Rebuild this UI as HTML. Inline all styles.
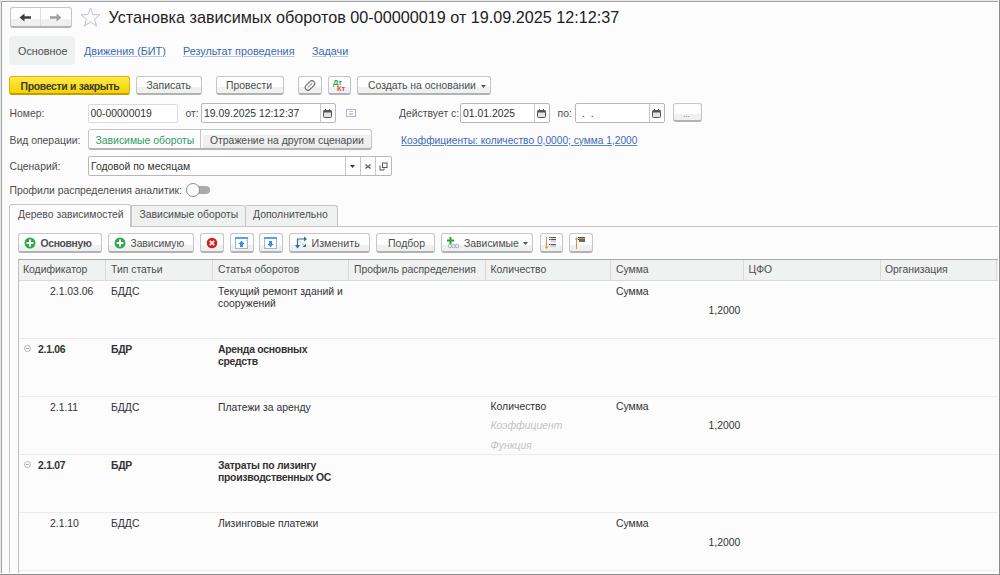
<!DOCTYPE html>
<html><head><meta charset="utf-8">
<style>
*{box-sizing:border-box;margin:0;padding:0}
html,body{width:1000px;height:575px;overflow:hidden;background:#fcfcfc}
body{position:relative;font-family:"Liberation Sans",sans-serif;font-size:10.4px;color:#4d4d4d}
.a{position:absolute}
.t{position:absolute;white-space:nowrap;line-height:1}
.btn{position:absolute;border:1px solid #c6c6c6;border-bottom:2px solid #b2b2b2;border-radius:3px;background:linear-gradient(#fefefe 0,#fefefe 62%,#eff0f0 62%,#eff0f0 100%)}
.inp{position:absolute;border:1px solid #bcbcbc;border-radius:2px;background:#fff}
.u{text-decoration:underline;text-decoration-color:#9db4dc;text-underline-offset:1px}
svg{position:absolute}
</style></head><body>
<div class="btn" style="left:10px;top:7px;width:62px;height:21px;"></div>
<div class="a" style="left:40px;top:8px;width:1px;height:18px;background:#dedede"></div>
<svg style="left:18px;top:11px" width="50" height="14" viewBox="0 0 50 14">
<path d="M1.5 6.5 L6.5 2.5 L6.5 5.3 L13 5.3 L13 7.7 L6.5 7.7 L6.5 10.5 Z" fill="#3e3e3e"/>
<path d="M43.5 6.5 L38.5 2.5 L38.5 5.3 L32 5.3 L32 7.7 L38.5 7.7 L38.5 10.5 Z" fill="#a0a0a0"/>
</svg>
<svg style="left:80px;top:7px" width="21" height="20" viewBox="0 0 21 20">
<path d="M10.5 1 L13 7.6 L20 7.8 L14.5 12 L16.5 19 L10.5 15 L4.5 19 L6.5 12 L1 7.8 L8 7.6 Z" fill="none" stroke="#bcc3cc" stroke-width="1"/>
</svg>
<div class="t" style="left:108.5px;top:8.79px;font-size:16.2px;color:#1e1e1e;">Установка зависимых оборотов 00-00000019 от 19.09.2025 12:12:37</div>
<div class="a" style="left:9px;top:36px;width:66px;height:29px;background:#eff0f0;border-radius:4px"></div>
<div class="t" style="left:18px;top:45.76px;font-size:10.8px;color:#4d4d4d;">Основное</div>
<div class="t" style="left:84px;top:45.76px;font-size:10.8px;color:#3c68b8;text-decoration:underline;text-decoration-color:#b4c6e6">Движения (БИТ)</div>
<div class="t" style="left:183px;top:45.76px;font-size:10.8px;color:#3c68b8;text-decoration:underline;text-decoration-color:#b4c6e6">Результат проведения</div>
<div class="t" style="left:312px;top:45.76px;font-size:10.8px;color:#3c68b8;text-decoration:underline;text-decoration-color:#b4c6e6">Задачи</div>
<div class="a" style="left:9px;top:76px;width:121px;height:19px;border:1px solid #d9b600;border-bottom:2px solid #bfa000;border-radius:3px;background:linear-gradient(#ffe94d,#f4d300)"></div>
<div class="t" style="left:20.5px;top:81.60px;font-size:10.4px;color:#3a3a2a;font-weight:bold;letter-spacing:-0.3px">Провести и закрыть</div>
<div class="btn" style="left:136px;top:76px;width:66px;height:19px;"></div>
<div class="t" style="left:146.5px;top:81.10px;font-size:10.4px;color:#4d4d4d;">Записать</div>
<div class="btn" style="left:216px;top:76px;width:68px;height:19px;"></div>
<div class="t" style="left:226px;top:81.10px;font-size:10.4px;color:#4d4d4d;">Провести</div>
<div class="btn" style="left:298px;top:76px;width:24px;height:19px;"></div>
<svg style="left:303px;top:79px" width="14" height="13" viewBox="0 0 14 13">
<g transform="rotate(45 7 6.5)"><rect x="4.2" y="1" width="5.6" height="11" rx="2.8" fill="none" stroke="#6a6a6a" stroke-width="1.1"/>
<path d="M7 3.5 V9" stroke="#8a8a8a" stroke-width="1"/></g>
</svg>
<div class="btn" style="left:328px;top:76px;width:23px;height:19px;"></div>
<div class="t" style="left:333px;top:79.05px;font-size:7.5px;color:#2ea452;font-weight:bold">Дт</div>
<div class="t" style="left:337px;top:85.35px;font-size:7.5px;color:#e04848;font-weight:bold">Кт</div>
<div class="btn" style="left:357px;top:76px;width:134px;height:19px;"></div>
<div class="t" style="left:368px;top:81.10px;font-size:10.4px;color:#4d4d4d;">Создать на основании</div>
<svg style="left:481px;top:85px" width="5" height="3" viewBox="0 0 5 3"><path d="M0 0 H5 L2.5 3 Z" fill="#555"/></svg>
<div class="t" style="left:9.5px;top:109.10px;font-size:10.4px;color:#4d4d4d;">Номер:</div>
<div class="a" style="left:88px;top:104px;width:90px;height:19px;border:1px solid #dadada;border-radius:2px;background:#fff"></div>
<div class="t" style="left:90.5px;top:109.10px;font-size:10.4px;color:#333;">00-00000019</div>
<div class="t" style="left:185.5px;top:109.10px;font-size:10.4px;color:#4d4d4d;">от:</div>
<div class="a" style="left:201px;top:103px;width:135px;height:20px;border:1px solid #b8b8b8;border-radius:2px;background:#fff"></div>
<div class="a" style="left:320px;top:104px;width:1px;height:18px;background:#c8c8c8"></div>
<div class="t" style="left:204px;top:109.10px;font-size:10.4px;color:#333;">19.09.2025 12:12:37</div>
<svg style="left:323px;top:109px" width="9" height="9" viewBox="0 0 9 9">
<rect x="0.5" y="1.5" width="8" height="7" rx="1" fill="#e4e4e4" stroke="#555" stroke-width="1"/>
<rect x="0.5" y="1.5" width="8" height="2" fill="#555"/>
<rect x="2" y="0" width="1" height="2" fill="#555"/><rect x="6" y="0" width="1" height="2" fill="#555"/>
</svg>
<svg style="left:346px;top:109px" width="10" height="8" viewBox="0 0 10 8">
<rect x="0.5" y="0.5" width="9" height="7" fill="#fff" stroke="#a9b9d2" stroke-width="1"/>
<rect x="3" y="2" width="4" height="1" fill="#c8c8c8"/><rect x="3" y="4" width="4" height="2" fill="#d0d0d0"/>
</svg>
<div class="t" style="left:399px;top:109.10px;font-size:10.4px;color:#4d4d4d;">Действует с:</div>
<div class="a" style="left:460px;top:103px;width:90px;height:20px;border:1px solid #b8b8b8;border-radius:2px;background:#fff"></div>
<div class="a" style="left:534px;top:104px;width:1px;height:18px;background:#c8c8c8"></div>
<div class="t" style="left:463px;top:109.10px;font-size:10.4px;color:#333;">01.01.2025</div>
<svg style="left:537px;top:109px" width="9" height="9" viewBox="0 0 9 9">
<rect x="0.5" y="1.5" width="8" height="7" rx="1" fill="#e4e4e4" stroke="#555" stroke-width="1"/>
<rect x="0.5" y="1.5" width="8" height="2" fill="#555"/>
<rect x="2" y="0" width="1" height="2" fill="#555"/><rect x="6" y="0" width="1" height="2" fill="#555"/>
</svg>
<div class="t" style="left:557.5px;top:109.10px;font-size:10.4px;color:#4d4d4d;">по:</div>
<div class="a" style="left:575px;top:103px;width:90px;height:20px;border:1px solid #b8b8b8;border-radius:2px;background:#fff"></div>
<div class="a" style="left:649px;top:104px;width:1px;height:18px;background:#c8c8c8"></div>
<div class="t" style="left:582px;top:109.10px;font-size:10.4px;color:#333;">.&nbsp;&nbsp;.</div>
<svg style="left:652px;top:109px" width="9" height="9" viewBox="0 0 9 9">
<rect x="0.5" y="1.5" width="8" height="7" rx="1" fill="#e4e4e4" stroke="#555" stroke-width="1"/>
<rect x="0.5" y="1.5" width="8" height="2" fill="#555"/>
<rect x="2" y="0" width="1" height="2" fill="#555"/><rect x="6" y="0" width="1" height="2" fill="#555"/>
</svg>
<div class="btn" style="left:673px;top:103px;width:29px;height:19px;"></div>
<div class="t" style="left:683px;top:111.13px;font-size:8px;color:#555;">...</div>
<div class="t" style="left:9.5px;top:135.60px;font-size:10.4px;color:#4d4d4d;">Вид операции:</div>
<div class="a" style="left:88px;top:129px;width:284px;height:21px;border:1px solid #c4c4c4;border-bottom:2px solid #b4b4b4;border-radius:3px;background:linear-gradient(#fdfdfd 0,#fdfdfd 5px,#eff0f0 5px,#eff0f0 80%,#e8e9e9 100%)"></div>
<div class="a" style="left:89px;top:130px;width:111px;height:18px;background:#fdfdfd;border-radius:2px 0 0 2px"></div>
<div class="a" style="left:201px;top:130px;width:2px;height:18px;background:#fbfbfb"></div>
<div class="a" style="left:200px;top:130px;width:1px;height:18px;background:#c4c4c4"></div>
<div class="t" style="left:95.5px;top:135.60px;font-size:10.4px;color:#2e9c62;">Зависимые обороты</div>
<div class="t" style="left:210px;top:135.60px;font-size:10.4px;color:#4d4d4d;">Отражение на другом сценарии</div>
<div class="t" style="left:401px;top:135.77px;font-size:10.2px;color:#3c68b8;text-decoration:underline;text-decoration-color:#5f86c8">Коэффициенты: количество 0,0000; сумма 1,2000</div>
<div class="t" style="left:9.5px;top:162.10px;font-size:10.4px;color:#4d4d4d;">Сценарий:</div>
<div class="a" style="left:88px;top:156px;width:304px;height:20px;border:1px solid #b8b8b8;border-radius:2px;background:#fff"></div>
<div class="a" style="left:345px;top:157px;width:1px;height:18px;background:#c8c8c8"></div>
<div class="a" style="left:360px;top:157px;width:1px;height:18px;background:#c8c8c8"></div>
<div class="a" style="left:375px;top:157px;width:1px;height:18px;background:#c8c8c8"></div>
<div class="t" style="left:91px;top:162.10px;font-size:10.4px;color:#333;">Годовой по месяцам</div>
<svg style="left:350px;top:165px" width="5" height="3" viewBox="0 0 5 3"><path d="M0 0 H5 L2.5 3 Z" fill="#333"/></svg>
<svg style="left:365px;top:164px" width="6" height="5" viewBox="0 0 6 5"><path d="M0.5 0.5 L5.5 4.5 M5.5 0.5 L0.5 4.5" stroke="#555" stroke-width="1.1"/></svg>
<svg style="left:379px;top:162px" width="9" height="9" viewBox="0 0 9 9">
<path d="M1 3.5 V8 H5 V6.5" fill="none" stroke="#555" stroke-width="1"/>
<rect x="3.5" y="1" width="4.5" height="4.5" fill="none" stroke="#555" stroke-width="1"/>
</svg>
<div class="t" style="left:9.5px;top:185.60px;font-size:10.4px;color:#4d4d4d;">Профили распределения аналитик:</div>
<div class="a" style="left:193px;top:186px;width:17px;height:8px;background:#aaaaaa;border-radius:0 4px 4px 0"></div>
<div class="a" style="left:186px;top:183px;width:14px;height:14px;background:#fff;border:1px solid #8f8f8f;border-radius:50%"></div>
<div class="a" style="left:9px;top:226px;width:989px;height:347px;border-left:1px solid #c6c6c6;border-top:1px solid #c6c6c6"></div>
<div class="a" style="left:9px;top:204px;width:122px;height:23px;background:#fcfcfc;border:1px solid #c6c6c6;border-bottom:none;border-radius:3px 3px 0 0"></div>
<div class="a" style="left:131px;top:205px;width:115px;height:21px;background:#eff0f0;border:1px solid #c6c6c6;border-left:none;border-bottom:none;border-radius:0 3px 0 0"></div>
<div class="a" style="left:246px;top:205px;width:92px;height:21px;background:#eff0f0;border:1px solid #c6c6c6;border-left:none;border-bottom:none;border-radius:0 3px 0 0"></div>
<div class="a" style="left:131px;top:205px;width:1px;height:21px;background:#c6c6c6"></div>
<div class="t" style="left:18px;top:210.10px;font-size:10.4px;color:#4d4d4d;">Дерево зависимостей</div>
<div class="t" style="left:139.5px;top:210.10px;font-size:10.4px;color:#4d4d4d;">Зависимые обороты</div>
<div class="t" style="left:253px;top:210.10px;font-size:10.4px;color:#4d4d4d;">Дополнительно</div>
<div class="btn" style="left:18px;top:233px;width:84px;height:20px;"></div>
<svg style="left:23.5px;top:237px" width="12" height="12" viewBox="0 0 12 12">
<circle cx="6" cy="6" r="5.5" fill="#2da84a"/>
<path d="M6 2.6 V9.4 M2.6 6 H9.4" stroke="#fff" stroke-width="2"/>
</svg>
<div class="t" style="left:40.5px;top:238.60px;font-size:10.4px;color:#4d4d4d;font-weight:bold;letter-spacing:-0.36px">Основную</div>
<div class="btn" style="left:108px;top:233px;width:86px;height:20px;"></div>
<svg style="left:113.5px;top:237px" width="12" height="12" viewBox="0 0 12 12">
<circle cx="6" cy="6" r="5.5" fill="#2da84a"/>
<path d="M6 2.6 V9.4 M2.6 6 H9.4" stroke="#fff" stroke-width="2"/>
</svg>
<div class="t" style="left:130.5px;top:238.77px;font-size:10.2px;color:#4d4d4d;">Зависимую</div>
<div class="btn" style="left:200px;top:233px;width:24px;height:20px;"></div>
<svg style="left:206px;top:237px" width="12" height="12" viewBox="0 0 12 12">
<circle cx="6" cy="6" r="5.3" fill="#d42020"/>
<path d="M3.8 3.8 L8.2 8.2 M8.2 3.8 L3.8 8.2" stroke="#fff" stroke-width="1.7"/>
</svg>
<div class="btn" style="left:230px;top:233px;width:24px;height:20px;"></div>
<svg style="left:235px;top:237px" width="13" height="12" viewBox="0 0 13 12">
<rect x="0.5" y="0.5" width="12" height="11" fill="#fff" stroke="#a3b6d2" stroke-width="1"/>
<rect x="0" y="0" width="13" height="2" fill="#5c9fe4"/>
<path d="M6.5 3.8 L9.7 7 H8 V10 H5 V7 H3.3 Z" fill="#3a8ee6"/>
</svg>
<div class="btn" style="left:259px;top:233px;width:24px;height:20px;"></div>
<svg style="left:264px;top:237px" width="13" height="12" viewBox="0 0 13 12">
<rect x="0.5" y="0.5" width="12" height="11" fill="#fff" stroke="#a3b6d2" stroke-width="1"/>
<rect x="0" y="0" width="13" height="2" fill="#5c9fe4"/>
<path d="M6.5 10.2 L9.7 7 H8 V4 H5 V7 H3.3 Z" fill="#3a8ee6"/>
</svg>
<div class="btn" style="left:289px;top:233px;width:81px;height:20px;"></div>
<svg style="left:295px;top:236px" width="13" height="13" viewBox="0 0 13 13">
<path d="M2.5 12 V3 H9" fill="none" stroke="#2d6db8" stroke-width="1.2"/>
<path d="M9 0.5 L12 3 L9 5.5 Z" fill="#2d6db8"/>
<path d="M0 9 L2.5 12.5 L5 9 Z" fill="#2d6db8"/>
<path d="M4 4.5 L10 10.5" stroke="#6a9fd8" stroke-width="1" stroke-dasharray="1.5 1"/>
<path d="M7.5 11 L11 11 L11 7.5 Z" fill="#2d6db8"/>
</svg>
<div class="t" style="left:311.5px;top:238.34px;font-size:10.7px;color:#4d4d4d;">Изменить</div>
<div class="btn" style="left:376px;top:233px;width:59px;height:20px;"></div>
<div class="t" style="left:388px;top:237.81px;font-size:10.5px;color:#4d4d4d;">Подбор</div>
<div class="btn" style="left:441px;top:233px;width:92px;height:20px;"></div>
<svg style="left:446px;top:236px" width="14" height="13" viewBox="0 0 14 13">
<circle cx="4" cy="10" r="1.8" fill="none" stroke="#9aaabb" stroke-width="0.9"/>
<circle cx="7.5" cy="10" r="1.8" fill="none" stroke="#9aaabb" stroke-width="0.9"/>
<circle cx="11" cy="10" r="1.8" fill="none" stroke="#9aaabb" stroke-width="0.9"/>
<path d="M4.5 1 V8 M1 4.5 H8" stroke="#22aa22" stroke-width="2"/>
</svg>
<div class="t" style="left:464px;top:238.60px;font-size:10.4px;color:#4d4d4d;">Зависимые</div>
<svg style="left:523px;top:242px" width="5" height="3" viewBox="0 0 5 3"><path d="M0 0 H5 L2.5 3 Z" fill="#555"/></svg>
<div class="btn" style="left:540px;top:233px;width:23px;height:20px;"></div>
<svg style="left:544px;top:236px" width="14" height="14" viewBox="0 0 14 14">
<path d="M2.5 1 V12" stroke="#f08a3a" stroke-width="1"/><path d="M0.8 10.5 L2.5 13 L4.2 10.5 Z" fill="#f08a3a"/>
<rect x="5" y="1" width="1" height="1" fill="#444"/><rect x="6.5" y="1" width="5.5" height="1.2" fill="#555"/>
<rect x="5" y="3" width="1" height="1" fill="#444"/><rect x="6.5" y="3" width="5.5" height="1.2" fill="#555"/>
<rect x="6.5" y="5" width="5.5" height="1.2" fill="#ccc"/>
<rect x="5" y="8" width="1" height="1" fill="#444"/><rect x="6.5" y="8" width="5.5" height="1.2" fill="#555"/>
<rect x="6.5" y="10" width="5.5" height="1.2" fill="#ccc"/>
</svg>
<div class="btn" style="left:569px;top:233px;width:24px;height:20px;"></div>
<svg style="left:573px;top:236px" width="14" height="14" viewBox="0 0 14 14">
<path d="M3.5 2 V13" stroke="#f08a3a" stroke-width="1"/><path d="M1.8 3.5 L3.5 1 L5.2 3.5 Z" fill="#f08a3a"/>
<rect x="5" y="1" width="1" height="1" fill="#444"/><rect x="6" y="1" width="6" height="1.3" fill="#555"/>
<rect x="5" y="3" width="1" height="1" fill="#444"/><rect x="6" y="2.5" width="6" height="3.5" fill="#6a6a6a"/>
</svg>
<div class="a" style="left:18px;top:259px;width:980px;height:314px;border-left:1px solid #bdbdbd;border-top:1px solid #a9a9a9;background:#fcfcfc"></div>
<div class="a" style="left:19px;top:260px;width:979px;height:21px;background:#f0f1f1;border-bottom:1px solid #d9d9d9"></div>
<div class="a" style="left:105px;top:260px;width:1px;height:20px;background:#dadada"></div>
<div class="a" style="left:212px;top:260px;width:1px;height:20px;background:#dadada"></div>
<div class="a" style="left:348px;top:260px;width:1px;height:20px;background:#dadada"></div>
<div class="a" style="left:485px;top:260px;width:1px;height:20px;background:#dadada"></div>
<div class="a" style="left:610px;top:260px;width:1px;height:20px;background:#dadada"></div>
<div class="a" style="left:743px;top:260px;width:1px;height:20px;background:#dadada"></div>
<div class="a" style="left:880px;top:260px;width:1px;height:20px;background:#dadada"></div>
<div class="a" style="left:996px;top:260px;width:1px;height:20px;background:#dadada"></div>
<div class="t" style="left:23px;top:265.10px;font-size:10.4px;color:#4d4d4d;">Кодификатор</div>
<div class="t" style="left:111px;top:265.10px;font-size:10.4px;color:#4d4d4d;">Тип статьи</div>
<div class="t" style="left:218px;top:265.10px;font-size:10.4px;color:#4d4d4d;">Статья оборотов</div>
<div class="t" style="left:354px;top:265.10px;font-size:10.4px;color:#4d4d4d;">Профиль распределения</div>
<div class="t" style="left:490.5px;top:265.10px;font-size:10.4px;color:#4d4d4d;">Количество</div>
<div class="t" style="left:616px;top:265.10px;font-size:10.4px;color:#4d4d4d;">Сумма</div>
<div class="t" style="left:748.5px;top:265.10px;font-size:10.4px;color:#4d4d4d;">ЦФО</div>
<div class="t" style="left:885px;top:265.10px;font-size:10.4px;color:#4d4d4d;">Организация</div>
<div class="a" style="left:19px;top:338px;width:979px;height:1px;background:#ececec"></div>
<div class="a" style="left:19px;top:396px;width:979px;height:1px;background:#ececec"></div>
<div class="a" style="left:19px;top:454px;width:979px;height:1px;background:#ececec"></div>
<div class="a" style="left:19px;top:512px;width:979px;height:1px;background:#ececec"></div>
<div class="a" style="left:19px;top:570px;width:979px;height:1px;background:#ececec"></div>
<div class="t" style="left:50px;top:286.50px;font-size:10.4px;color:#333;">2.1.03.06</div>
<div class="t" style="left:111px;top:286.50px;font-size:10.4px;color:#333;">БДДС</div>
<div class="t" style="left:218px;top:286.50px;font-size:10.4px;color:#333;">Текущий ремонт зданий и</div>
<div class="t" style="left:218px;top:299.00px;font-size:10.4px;color:#333;">сооружений</div>
<div class="t" style="left:616px;top:286.50px;font-size:10.4px;color:#333;">Сумма</div>
<div class="t" style="left:708.5px;top:305.70px;font-size:10.4px;color:#333;">1,2000</div>
<svg style="left:24px;top:345px" width="7" height="7" viewBox="0 0 7 7"><circle cx="3.5" cy="3.5" r="3" fill="none" stroke="#aaa" stroke-width="0.9"/><path d="M1.8 3.5 H5.2" stroke="#aaa" stroke-width="0.9"/></svg>
<div class="t" style="left:38px;top:344.50px;font-size:10.4px;color:#333;font-weight:bold;letter-spacing:-0.26px">2.1.06</div>
<div class="t" style="left:111px;top:344.50px;font-size:10.4px;color:#333;font-weight:bold;letter-spacing:-0.26px">БДР</div>
<div class="t" style="left:218px;top:344.50px;font-size:10.4px;color:#333;font-weight:bold;letter-spacing:-0.26px">Аренда основных</div>
<div class="t" style="left:218px;top:357.00px;font-size:10.4px;color:#333;font-weight:bold;letter-spacing:-0.26px">средств</div>
<div class="t" style="left:50px;top:402.50px;font-size:10.4px;color:#333;">2.1.11</div>
<div class="t" style="left:111px;top:402.50px;font-size:10.4px;color:#333;">БДДС</div>
<div class="t" style="left:218px;top:402.50px;font-size:10.4px;color:#333;">Платежи за аренду</div>
<div class="t" style="left:490.5px;top:402.10px;font-size:10.4px;color:#333;">Количество</div>
<div class="t" style="left:616px;top:402.10px;font-size:10.4px;color:#333;">Сумма</div>
<div class="t" style="left:708.5px;top:421.40px;font-size:10.4px;color:#333;">1,2000</div>
<div class="t" style="left:490.5px;top:421.40px;font-size:10.4px;color:#c4c4c4;font-style:italic">Коэффициент</div>
<div class="t" style="left:490.5px;top:440.70px;font-size:10.4px;color:#c4c4c4;font-style:italic">Функция</div>
<svg style="left:24px;top:461px" width="7" height="7" viewBox="0 0 7 7"><circle cx="3.5" cy="3.5" r="3" fill="none" stroke="#aaa" stroke-width="0.9"/><path d="M1.8 3.5 H5.2" stroke="#aaa" stroke-width="0.9"/></svg>
<div class="t" style="left:38px;top:460.50px;font-size:10.4px;color:#333;font-weight:bold;letter-spacing:-0.26px">2.1.07</div>
<div class="t" style="left:111px;top:460.50px;font-size:10.4px;color:#333;font-weight:bold;letter-spacing:-0.26px">БДР</div>
<div class="t" style="left:218px;top:460.50px;font-size:10.4px;color:#333;font-weight:bold;letter-spacing:-0.26px">Затраты по лизингу</div>
<div class="t" style="left:218px;top:473.00px;font-size:10.4px;color:#333;font-weight:bold;letter-spacing:-0.26px">производственных ОС</div>
<div class="t" style="left:50px;top:518.50px;font-size:10.4px;color:#333;">2.1.10</div>
<div class="t" style="left:111px;top:518.50px;font-size:10.4px;color:#333;">БДДС</div>
<div class="t" style="left:218px;top:518.50px;font-size:10.4px;color:#333;">Лизинговые платежи</div>
<div class="t" style="left:616px;top:518.50px;font-size:10.4px;color:#333;">Сумма</div>
<div class="t" style="left:708.5px;top:537.70px;font-size:10.4px;color:#333;">1,2000</div>
<div class="a" style="left:0px;top:0px;width:999px;height:1px;background:#e8e9ea"></div>
<div class="a" style="left:0px;top:0px;width:1px;height:574px;background:#e8e9ea"></div>
<div class="a" style="left:1px;top:1px;width:997px;height:1px;background:#a2a2a2"></div>
<div class="a" style="left:1px;top:1px;width:1px;height:572px;background:#a2a2a2"></div>
<div class="a" style="left:2px;top:2px;width:996px;height:1px;background:#fff"></div>
<div class="a" style="left:998px;top:0px;width:1px;height:574px;background:#fff"></div>
<div class="a" style="left:0px;top:573px;width:999px;height:1px;background:#fff"></div>
<div class="a" style="left:999px;top:0px;width:1px;height:575px;background:#8c8c8c"></div>
<div class="a" style="left:0px;top:574px;width:1000px;height:1px;background:#8c8c8c"></div>
</body></html>
